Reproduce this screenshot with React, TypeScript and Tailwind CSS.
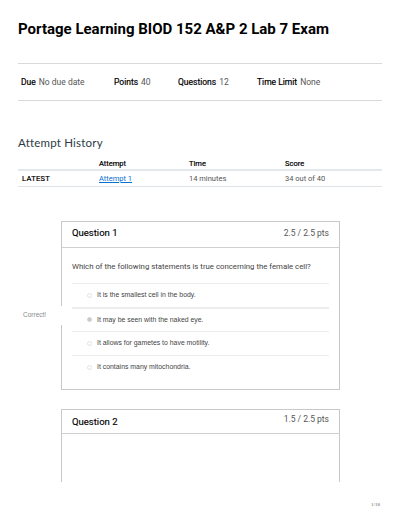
import React from 'react';

const answers = [
  { text: 'It is the smallest cell in the body.', picked: false },
  { text: 'It may be seen with the naked eye.', picked: true },
  { text: 'It allows for gametes to have motility.', picked: false },
  { text: 'It contains many mitochondria.', picked: false },
];

const meta = [
  { label: 'Due', value: 'No due date', w: 'w-[93px]' },
  { label: 'Points', value: '40', w: 'w-[64px]' },
  { label: 'Questions', value: '12', w: 'w-[79px]' },
  { label: 'Time Limit', value: 'None', w: '' },
];

const Radio = ({ picked }: { picked: boolean }) => (
  <span
    className={
      picked
        ? 'w-[5px] h-[5px] rounded-full border border-[#d4d4d4] bg-[#c8c8c8]'
        : 'w-[5px] h-[5px] rounded-full border border-[#e2e2e2] bg-white'
    }
  />
);

export default function App() {
  return (
    <div className="relative w-[400px] h-[517px] bg-white overflow-hidden font-['Roboto',sans-serif] text-[#2d3b45]">
      <div className="px-[18px]">
        {/* title */}
        <h1 className="pt-[19px] h-[63px] text-[15px] font-bold text-black leading-[20px]">
          Portage Learning BIOD 152 A&amp;P 2 Lab 7 Exam
        </h1>

        {/* quiz details */}
        <div className="h-[38px] border-y border-[#d9d9d9] flex items-center pl-[3px] text-[8.5px]">
          {meta.map((m) => (
            <div key={m.label} className={`${m.w} flex gap-[3px]`}>
              <span className="font-normal text-black [-webkit-text-stroke:0.2px_black]">{m.label}</span>
              <span className="text-[#555]">{m.value}</span>
            </div>
          ))}
        </div>

        {/* attempt history */}
        <h2 className="mt-[34px] text-[11.5px] font-['Lato',sans-serif] text-[#2d3b45] leading-[16px] tracking-[0.2px]">
          Attempt History
        </h2>
        <table className="mt-[7px] w-full text-[7.5px] border-collapse">
          <thead>
            <tr className="h-[12px] border-b-2 border-[#e4e8eb]">
              <th className="w-[81px]" />
              <th className="text-left font-normal text-black [-webkit-text-stroke:0.2px_black] w-[90px]">Attempt</th>
              <th className="text-left font-normal text-black [-webkit-text-stroke:0.2px_black] w-[96px]">Time</th>
              <th className="text-left font-normal text-black [-webkit-text-stroke:0.2px_black]">Score</th>
            </tr>
          </thead>
          <tbody>
            <tr className="h-[16px] border-b border-[#dde2e6]">
              <td className="pl-[4px] font-normal text-black [-webkit-text-stroke:0.2px_black] tracking-[0.3px]">LATEST</td>
              <td>
                <span className="text-[#0770d1] underline">Attempt 1</span>
              </td>
              <td className="text-[#555]">14 minutes</td>
              <td className="text-[#555]">34 out of 40</td>
            </tr>
          </tbody>
        </table>
      </div>

      {/* question 1 */}
      <div className="relative mt-[34px] ml-[61px] w-[279px] border border-[#c8c8c8]">
        <div className="h-[26px] border-b border-[#d0d0d0] flex items-start justify-between px-[10px]">
          <span className="mt-[4px] text-[9.5px] font-normal text-black [-webkit-text-stroke:0.15px_black]">Question 1</span>
          <span className="mt-[5px] text-[8.5px] text-[#555]">2.5 / 2.5 pts</span>
        </div>
        <div className="px-[10px] pb-[10px]">
          <p className="mt-[14px] text-[7.8px] text-[#444] leading-[10px]">
            Which of the following statements is true concerning the female cell?
          </p>
          <div className="mt-[11px] font-['Liberation_Sans',sans-serif] text-[6.9px] text-[#444]">
            {answers.map((a, i) => (
              <div
                key={i}
                className={
                  i === 1
                    ? 'h-[24px] border-t-2 border-[#ececec] flex items-center gap-[5px] pl-[15px]'
                    : 'h-[24px] border-t border-[#ececec] flex items-center gap-[5px] pl-[15px]'
                }
              >
                <Radio picked={a.picked} />
                <span>{a.text}</span>
              </div>
            ))}
          </div>
        </div>
        <div className="absolute left-[-47px] top-[84px] w-[48px] h-[19px] bg-white flex items-center pl-[8px] font-['Liberation_Sans',sans-serif] text-[6.5px] text-[#888]">
          Correct!
        </div>
      </div>

      {/* question 2 */}
      <div className="mt-[19px] ml-[61px] w-[279px] h-[73px] border-x border-t border-[#c8c8c8]">
        <div className="h-[24px] border-b border-[#d0d0d0] flex items-start justify-between px-[10px]">
          <span className="mt-[5px] text-[9.5px] font-normal text-black [-webkit-text-stroke:0.15px_black]">Question 2</span>
          <span className="mt-[3px] text-[8.5px] text-[#555]">1.5 / 2.5 pts</span>
        </div>
      </div>

      <div className="absolute left-[371px] top-[501px] text-[5px] text-[#666] font-['Liberation_Serif',serif]">
        1/18
      </div>
    </div>
  );
}
